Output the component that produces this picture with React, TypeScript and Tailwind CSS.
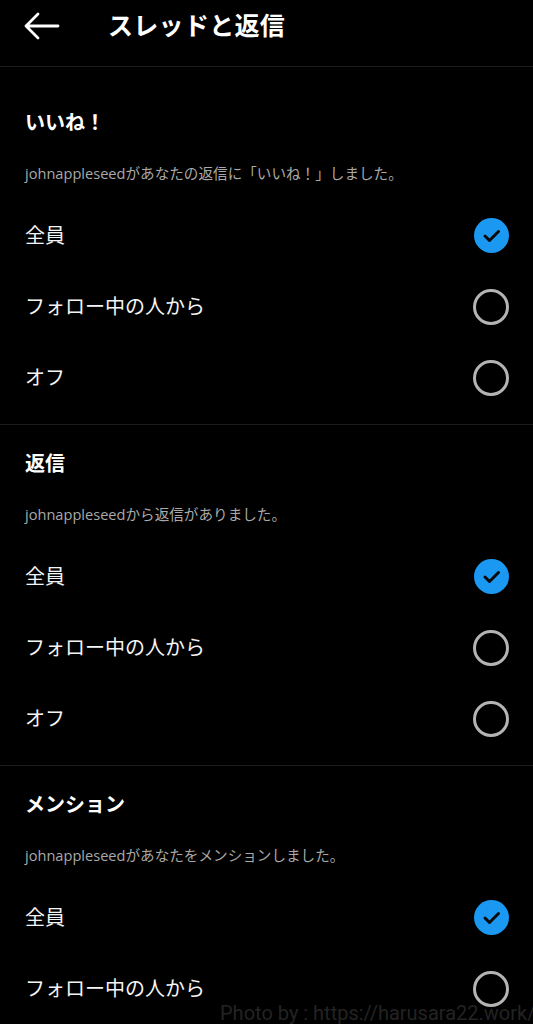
const sections = [
  {
    title: "いいね！",
    note: "johnappleseedがあなたの返信に「いいね！」しました。",
    first: true,
  },
  {
    title: "返信",
    note: "johnappleseedから返信がありました。",
    first: false,
  },
  {
    title: "メンション",
    note: "johnappleseedがあなたをメンションしました。",
    first: false,
  },
];

const options = ["全員", "フォロー中の人から", "オフ"];

function Radio({ checked }: { checked: boolean }) {
  if (checked) {
    return (
      <span className="flex h-[35px] w-[35px] items-center justify-center rounded-full bg-[#1a98f2]">
        <svg width="35" height="35" viewBox="0 0 35 35" fill="none">
          <path d="M11 18l4.5 4.5L24.5 13.5" stroke="#0b0b0b" strokeWidth="3" strokeLinecap="round" strokeLinejoin="round" />
        </svg>
      </span>
    );
  }
  return <span className="h-[36px] w-[36px] rounded-full border-[3px] border-[#b4b4b4]" />;
}

export default function App() {
  return (
    <main
      className="relative h-[1024px] w-[533px] overflow-hidden bg-black text-[#f4f4f4]"
      style={{ fontFamily: 'Roboto, "Noto Sans CJK JP", sans-serif' }}
    >
      <header className="flex h-[67px] items-center border-b border-[#1c1c1c] pb-[13px]">
        <svg className="ml-[23px]" width="38" height="30" viewBox="0 0 38 30" fill="none">
          <path d="M3 14h32M15 2L3 14l12 12" stroke="#ffffff" strokeWidth="2.8" strokeLinecap="round" strokeLinejoin="round" />
        </svg>
        <h1 className="ml-[47px] text-[25px] font-bold tracking-[0.3px] text-white">スレッドと返信</h1>
      </header>

      {sections.map((section) => (
        <section
          key={section.title}
          className={`border-b border-[#1c1c1c] pb-[11px] ${section.first ? "pt-[42px]" : "pt-[25px]"}`}
        >
          <h2 className="px-[25px] text-[20px] leading-[28px] font-bold text-white">{section.title}</h2>
          <p className="mt-[26px] px-[25px] font-['Open_Sans','Noto_Sans_CJK_JP',sans-serif] text-[14.6px] leading-[20px] text-[#a9a9a9]">
            {section.note}
          </p>
          <div className="mt-[17px]">
            {options.map((option, i) => (
              <div key={option} className="flex h-[71px] items-center justify-between pr-[24px] pl-[25px]">
                <span className="text-[20px] leading-[28px]">{option}</span>
                <Radio checked={i === 0} />
              </div>
            ))}
          </div>
        </section>
      ))}

      <div className="absolute bottom-0 left-[220px] text-[20px] leading-[22px] whitespace-nowrap text-[#232323]">
        Photo by : https://harusara22.work/
      </div>
    </main>
  );
}
